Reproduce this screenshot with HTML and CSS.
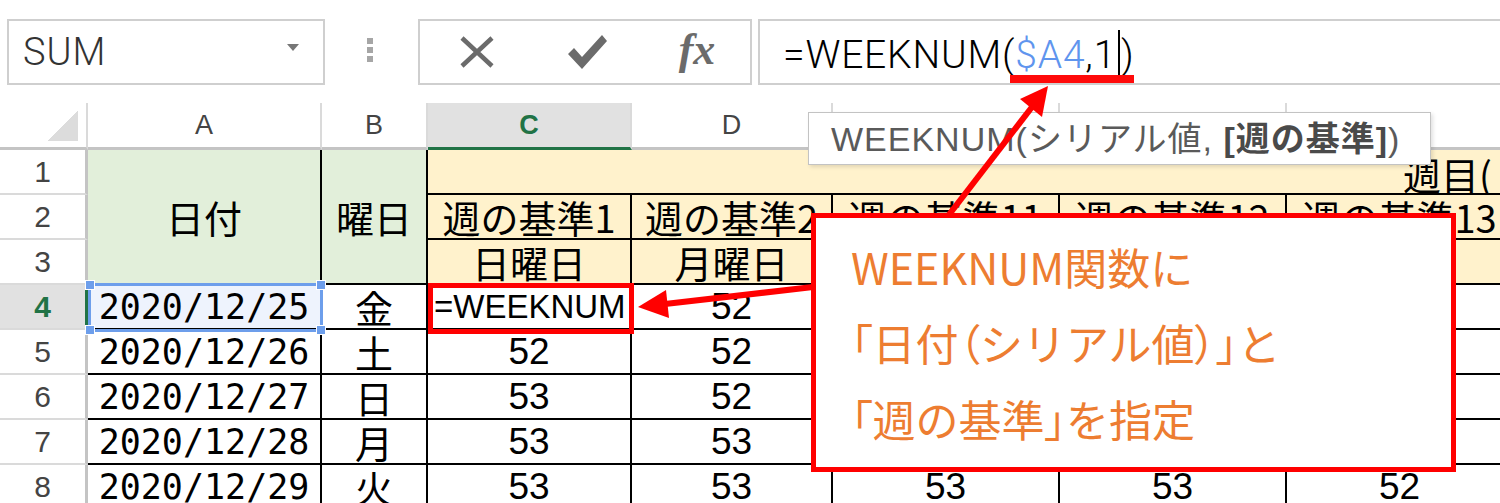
FILE: index.html
```html
<!DOCTYPE html>
<html lang="ja">
<head>
    <meta charset="UTF-8">
    <meta name="viewport" content="width=device-width, initial-scale=1.0">
    <title>WEEKNUM関数</title>
    <link rel="stylesheet" href="styles.css">
</head>
<body>
    <!-- Formula bar -->
    <div class="formula-bar">
        <div class="name-box">
            <span class="name">SUM</span>
            <span class="drop"></span>
        </div>
        <div class="grip"><i></i><i></i><i></i></div>
        <div class="fx-buttons">
            <span class="btn-icon">
                <svg width="36" height="32" viewBox="0 0 36 32"><path d="M3 2 L33 30 M33 2 L3 30" stroke="#6b6b6b" stroke-width="4.5" fill="none"/></svg>
            </span>
            <span class="btn-icon">
                <svg width="40" height="36" viewBox="0 0 40 36"><path d="M1 20 L7 14 L15 23 L35 1 L40 7 L15 35 Z" fill="#6b6b6b"/></svg>
            </span>
            <span class="btn-icon fx">fx</span>
        </div>
        <div class="formula-input">=WEEKNUM(<span class="ref">$A4</span>,1<span class="cursor"></span>)</div>
    </div>

    <!-- Sheet -->
    <table class="sheet">
        <tr class="col-heads">
            <th class="corner"><div class="corner-mark"></div></th>
            <th class="w-a">A</th>
            <th class="w-b">B</th>
            <th class="w-c active">C</th>
            <th class="w-d">D</th>
            <th class="w-e">E</th>
            <th class="w-f">F</th>
            <th class="w-g">G</th>
        </tr>
        <tr>
            <th class="row-head">1</th>
            <td rowspan="3" class="green jp">日付</td>
            <td rowspan="3" class="green jp">曜日</td>
            <td colspan="5" class="cream jp title">週目(</td>
        </tr>
        <tr>
            <th class="row-head">2</th>
            <td class="cream jp">週の基準1</td>
            <td class="cream jp">週の基準2</td>
            <td class="cream jp">週の基準11</td>
            <td class="cream jp">週の基準12</td>
            <td class="cream jp">週の基準13</td>
        </tr>
        <tr>
            <th class="row-head">3</th>
            <td class="cream jp">日曜日</td>
            <td class="cream jp">月曜日</td>
            <td class="cream jp"></td>
            <td class="cream jp"></td>
            <td class="cream jp"></td>
        </tr>
        <tr>
            <th class="row-head active">4</th>
            <td class="date picked">2020/12/25</td>
            <td class="jp">金</td>
            <td class="editing">=WEEKNUM</td>
            <td>52</td>
            <td></td>
            <td></td>
            <td></td>
        </tr>
        <tr>
            <th class="row-head">5</th>
            <td class="date">2020/12/26</td>
            <td class="jp">土</td>
            <td>52</td>
            <td>52</td>
            <td></td>
            <td></td>
            <td></td>
        </tr>
        <tr>
            <th class="row-head">6</th>
            <td class="date">2020/12/27</td>
            <td class="jp">日</td>
            <td>53</td>
            <td>52</td>
            <td></td>
            <td></td>
            <td></td>
        </tr>
        <tr>
            <th class="row-head">7</th>
            <td class="date">2020/12/28</td>
            <td class="jp">月</td>
            <td>53</td>
            <td>53</td>
            <td></td>
            <td></td>
            <td></td>
        </tr>
        <tr>
            <th class="row-head">8</th>
            <td class="date">2020/12/29</td>
            <td class="jp">火</td>
            <td>53</td>
            <td>53</td>
            <td>53</td>
            <td>53</td>
            <td>52</td>
        </tr>
    </table>

    <!-- Overlays: reference range, annotation marks, tooltip, callout, arrows -->
    <div class="ref-range">
        <span class="handle tl"></span><span class="handle tr"></span>
        <span class="handle bl"></span><span class="handle br"></span>
    </div>
    <div class="mark-box"></div>
    <div class="mark-line"></div>

    <div class="tooltip">WEEKNUM(シリアル値, <b>[週の基準]</b>)</div>

    <div class="callout">
        <p>WEEKNUM関数に</p>
        <p><span class="kakko">「</span>日付<span class="kakko">（</span>シリアル値<span class="kakko">）」</span>と</p>
        <p><span class="kakko">「</span>週の基準<span class="kakko">」</span>を指定</p>
    </div>

    <svg class="arrows" width="1500" height="503" viewBox="0 0 1500 503">
        <line x1="948" y1="216" x2="1032" y2="107" stroke="#ff0000" stroke-width="6"/>
        <polygon points="1048,86 1042,117 1020,99" fill="#ff0000"/>
        <line x1="813" y1="287" x2="665" y2="304" stroke="#ff0000" stroke-width="6"/>
        <polygon points="638,307 666,290 669,318" fill="#ff0000"/>
    </svg>
</body>
</html>
```

FILE: styles.css
```css
/* Reset */
* {
    margin: 0;
    padding: 0;
    box-sizing: border-box;
}

body {
    position: relative;
    width: 1500px;
    height: 503px;
    overflow: hidden;
    background: #ffffff;
    font-family: "Liberation Sans", "Noto Sans CJK JP", sans-serif;
    color: #000000;
}

/* Formula bar */
.formula-bar {
    display: flex;
    align-items: center;
    height: 103px;
    padding-left: 7px;
}

.name-box {
    display: flex;
    align-items: center;
    justify-content: space-between;
    width: 318px;
    height: 66px;
    padding: 0 24px 0 14px;
    border: 2px solid #cfcfcf;
}

.name {
    font-family: Roboto, sans-serif;
    font-weight: 300;
    font-size: 38px;
    color: #333333;
    letter-spacing: 1px;
}

.drop {
    width: 0;
    height: 0;
    border-left: 6px solid transparent;
    border-right: 6px solid transparent;
    border-top: 7px solid #777777;
    margin-bottom: 8px;
}

.grip {
    display: flex;
    flex-direction: column;
    gap: 3px;
    margin-left: 42px;
    margin-bottom: 4px;
}

.grip i {
    display: block;
    width: 6px;
    height: 6px;
    background: #a6a6a6;
}

.fx-buttons {
    display: grid;
    grid-template-columns: 110px 110px 110px;
    align-items: center;
    justify-items: center;
    width: 334px;
    height: 66px;
    margin-left: 45px;
    padding-left: 2px;
    border: 2px solid #cfcfcf;
}

.btn-icon {
    display: flex;
    align-items: center;
    justify-content: center;
}

.fx {
    font-family: "Liberation Serif", serif;
    font-style: italic;
    font-weight: bold;
    font-size: 44px;
    color: #6b6b6b;
    margin-bottom: 4px;
}

.formula-input {
    flex: 1;
    height: 66px;
    margin-left: 6px;
    margin-right: -20px;
    padding: 9px 0 0 23px;
    border: 2px solid #cfcfcf;
    font-family: Roboto, sans-serif;
    font-weight: 300;
    font-size: 39px;
    line-height: 42px;
    letter-spacing: 0.8px;
    white-space: nowrap;
}

.ref {
    color: #5f95ee;
}

.cursor {
    display: inline-block;
    width: 2px;
    height: 52px;
    margin: 0 1px 0 2px;
    background: #000000;
    vertical-align: -14px;
}

/* Sheet */
.sheet {
    border-collapse: separate;
    border-spacing: 0;
    table-layout: fixed;
    width: 1514px;
}

.sheet th,
.sheet td {
    height: 45px;
    padding: 0;
    line-height: 40px;
    text-align: center;
    vertical-align: middle;
    white-space: nowrap;
    overflow: hidden;
}

.col-heads th {
    height: 47px;
    font-size: 27px;
    font-weight: normal;
    color: #444444;
    border-right: 2px solid #dadada;
    border-bottom: 3px solid #c4c4c4;
}

.col-heads th.active {
    background: #e1e1e1;
    color: #217346;
    font-weight: bold;
    border-bottom-color: #217346;
}

.corner {
    width: 88px;
    vertical-align: bottom !important;
}

.corner-mark {
    width: 30px;
    height: 30px;
    margin: 0 8px 6px auto;
    background: linear-gradient(to bottom right, transparent 50%, #dcdcdc 50%);
}

.w-a { width: 234px; }
.w-b { width: 106px; }
.w-c { width: 204px; }
.w-d { width: 201px; }
.w-e { width: 227px; }
.w-f { width: 227px; }
.w-g { width: 227px; }

.row-head {
    font-size: 30px;
    font-weight: normal;
    color: #444444;
    border-right: 3px solid #c4c4c4;
    border-bottom: 2px solid #dadada;
}

.row-head.active {
    background: #e1e1e1;
    color: #217346;
    font-weight: bold;
    border-right-color: #217346;
}

.sheet td {
    font-size: 37px;
    border-right: 2px solid #000000;
    border-bottom: 2px solid #000000;
}

.sheet td.jp {
    font-family: "Noto Sans CJK JP", sans-serif;
    font-size: 38px;
}

.sheet td.date {
    font-family: "DejaVu Sans Mono", monospace;
    font-size: 35px;
}

.green {
    background: #e2efda;
}

.cream {
    background: #fff2cc;
}

.sheet td.title {
    text-align: left;
    padding-left: 975px;
    vertical-align: bottom;
    line-height: 38px;
}

.picked {
    background: #eef3fd;
}

.sheet td.editing {
    text-align: left;
    padding-left: 6px;
    font-size: 33px;
}

/* Range picked by the formula */
.ref-range {
    position: absolute;
    left: 88px;
    top: 283px;
    width: 235px;
    height: 49px;
    border: 3px solid #6d9eeb;
}

.handle {
    position: absolute;
    width: 10px;
    height: 10px;
    background: #6d9eeb;
    border: 1px solid #ffffff;
}

.handle.tl { left: -6px; top: -6px; }
.handle.tr { right: -6px; top: -6px; }
.handle.bl { left: -6px; bottom: -6px; }
.handle.br { right: -6px; bottom: -6px; }

/* Annotation marks */
.mark-box {
    position: absolute;
    left: 428px;
    top: 283px;
    width: 206px;
    height: 51px;
    border: 5px solid #ff0000;
}

.mark-line {
    position: absolute;
    left: 1010px;
    top: 75px;
    width: 124px;
    height: 8px;
    background: #ff0a0a;
}

/* Tooltip */
.tooltip {
    position: absolute;
    left: 808px;
    top: 112px;
    width: 623px;
    height: 53px;
    padding: 6px 0 0 22px;
    background: #ffffff;
    border: 1px solid #c3c3c3;
    box-shadow: 2px 2px 4px rgba(0, 0, 0, 0.12);
    font-size: 34px;
    line-height: 40px;
    letter-spacing: 1px;
    color: #5a5a5a;
    white-space: nowrap;
}

.tooltip b {
    color: #4a4a4a;
}

/* Callout */
.callout {
    position: absolute;
    left: 811px;
    top: 213px;
    width: 645px;
    height: 259px;
    padding: 10px 0 0 35px;
    background: #ffffff;
    border: 5px solid #ff0000;
    font-family: "Noto Sans CJK JP", sans-serif;
    font-size: 43px;
    line-height: 76px;
    color: #ed7d31;
    white-space: nowrap;
}

.kakko {
    font-feature-settings: "palt";
}

.arrows {
    position: absolute;
    left: 0;
    top: 0;
}
```
